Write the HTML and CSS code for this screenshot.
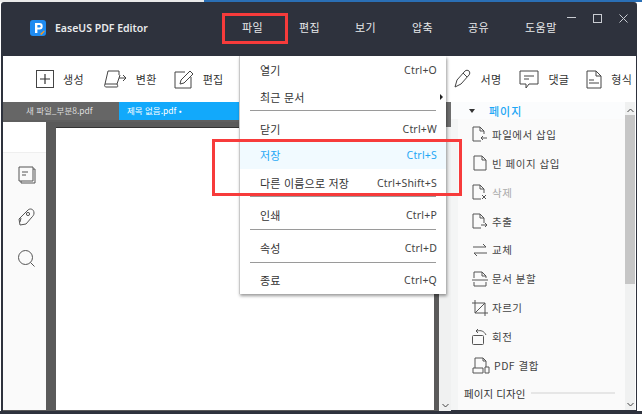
FILE: index.html
```html
<!DOCTYPE html>
<html lang="ko">
<head>
    <meta charset="UTF-8">
    <title>EaseUS PDF Editor</title>
    <link rel="stylesheet" href="styles.css">
</head>
<body>
<div class="app">
    <div class="top-strip"><div class="strip-blue"></div></div>
    <header class="titlebar">
        <div class="brand">
            <svg class="logo" width="16" height="16" viewBox="0 0 16 16">
                <rect width="16" height="16" rx="3" fill="#1f8bf0"/>
                <path d="M5 3h4.500a3 3 0 0 1 0 6.400H7.400V13H5z" fill="#fff"/>
                <path d="M7.400 5v2.400h2a1.200 1.200 0 0 0 0-2.400z" fill="#1f8bf0"/>
                <path d="M10 14l4-3.600.8.8L11.500 15z" fill="#f59a23"/>
            </svg>
            <span class="brand-name">EaseUS PDF Editor</span>
        </div>
        <nav class="menubar">
            <span class="menu-file">파일</span>
            <span class="menu-edit">편집</span>
            <span class="menu-view">보기</span>
            <span class="menu-zip">압축</span>
            <span class="menu-share">공유</span>
            <span class="menu-help">도움말</span>
        </nav>
        <div class="win-controls">
            <svg width="9" height="9" viewBox="0 0 9 9"><path d="M0 3.500h9" stroke="#c9ccd2" fill="none"/></svg>
            <svg width="9" height="9" viewBox="0 0 9 9"><rect x=".5" y=".5" width="8" height="8" stroke="#c9ccd2" fill="none"/></svg>
            <svg width="9" height="9" viewBox="0 0 9 9"><path d="M.5.5l8 8M8.500.5l-8 8" stroke="#c9ccd2" fill="none"/></svg>
        </div>
    </header>
    <div class="workspace">
        <div class="toolbar">
            <div class="tool tool-create">
                <svg width="18" height="18" viewBox="0 0 18 18"><rect x=".5" y=".5" width="17" height="17" fill="none" stroke="#444"/><path d="M9 4v10M4 9h10" stroke="#333" stroke-width="1.200"/></svg>
                <span>생성</span>
            </div>
            <div class="tool tool-convert">
                <svg width="24" height="18" viewBox="0 0 24 18"><path d="M5 1h11v4M5 1L2 14h12l3-9M2 14c-1 2 0 3 1 3h11c1 0 1-1 0-3M16 8h7M20 5l3 3-3 3" fill="none" stroke="#444"/></svg>
                <span>변환</span>
            </div>
            <div class="tool tool-edit">
                <svg width="20" height="20" viewBox="0 0 20 20"><path d="M11 3H1v16h16V8" fill="none" stroke="#444"/><path d="M6 15l1-4 9-9 3 3-9 9z" fill="none" stroke="#444"/></svg>
                <span>편집</span>
            </div>
            <div class="tool tool-sign">
                <svg width="18" height="20" viewBox="0 0 18 20"><path d="M1 18l2-7 8-9c1-1 3-1 4 0s1 3 0 4l-8 9zM9 4l4 4" fill="none" stroke="#444"/></svg>
                <span>서명</span>
            </div>
            <div class="tool tool-comment">
                <svg width="20" height="19" viewBox="0 0 20 19"><path d="M1 1h18v13H10l-3 4v-4H1z" fill="none" stroke="#444"/><path d="M5 6h10M5 9h5" stroke="#444"/></svg>
                <span>댓글</span>
            </div>
            <div class="tool tool-form">
                <svg width="16" height="19" viewBox="0 0 16 19"><path d="M1 1h9l5 5v12H1zM10 1v5h5M3 10h5M3 13h10" fill="none" stroke="#444"/></svg>
                <span>형식</span>
            </div>
        </div>
        <div class="content">
            <div class="doc-area">
                <div class="tabs">
                    <div class="tab">새 파일_부분8.pdf</div>
                    <div class="tab tab-active">제목 없음.pdf •</div>
                </div>
                <div class="doc-body">
                    <aside class="sidebar">
                        <div class="side-top"></div>
                        <div class="side-icons">
                            <svg width="18" height="18" viewBox="0 0 18 18"><path d="M1 1h14v14H1zM15 3h2v14H3v-2M4 6h6M4 9h4" fill="none" stroke="#555"/></svg>
                            <svg width="17" height="18" viewBox="0 0 17 18"><path d="M1 11L10 2c2-2 6-1 6 3 0 2-1 3-2 4l-6 7-6 1zM3 10l-1 4" fill="none" stroke="#555"/><circle cx="10" cy="6" r="1.600" fill="none" stroke="#555"/></svg>
                            <svg width="17" height="17" viewBox="0 0 17 17"><circle cx="7.500" cy="7.500" r="7" fill="none" stroke="#555"/><path d="M12.500 12.500l4 4" stroke="#555"/></svg>
                        </div>
                    </aside>
                    <main class="page-gutter">
                        <div class="page"></div>
                    </main>
                    <div class="doc-scroll">
                        <div class="doc-thumb"></div>
                        <svg class="chev" width="7" height="5" viewBox="0 0 7 5"><path d="M.5 1l3 3 3-3" fill="none" stroke="#444"/></svg>
                    </div>
                </div>
            </div>
            <aside class="panel">
                <div class="panel-head">
                    <span class="caret"></span>
                    <span class="panel-title">페이지</span>
                </div>
                <div class="panel-list">
                    <div class="panel-item">
                        <svg width="16" height="16" viewBox="0 0 16 16"><path d="M1 1h7l4 4v3M8 1v4h4M9 15H1V1M15 12h-6M11 10l-2 2 2 2" fill="none" stroke="#555"/></svg>
                        <span>파일에서 삽입</span>
                    </div>
                    <div class="panel-item">
                        <svg width="16" height="16" viewBox="0 0 16 16"><path d="M2 1h8l4 4v10H2zM10 1v4h4" fill="none" stroke="#555"/></svg>
                        <span>빈 페이지 삽입</span>
                    </div>
                    <div class="panel-item item-off">
                        <svg width="16" height="16" viewBox="0 0 16 16"><path d="M9 15H1V1h7l4 4v4M8 1v4h4M10 11l4 4M14 11l-4 4" fill="none" stroke="#555"/></svg>
                        <span>삭제</span>
                    </div>
                    <div class="panel-item">
                        <svg width="16" height="16" viewBox="0 0 16 16"><path d="M9 15H1V1h7l4 4v5M8 1v4h4M9 12h6M13 10l2 2-2 2" fill="none" stroke="#555"/></svg>
                        <span>추출</span>
                    </div>
                    <div class="panel-item">
                        <svg width="16" height="16" viewBox="0 0 16 16"><path d="M1 5h13M11 2l3 3M15 11H2M5 14l-3-3" fill="none" stroke="#555"/></svg>
                        <span>교체</span>
                    </div>
                    <div class="panel-item">
                        <svg width="16" height="16" viewBox="0 0 16 16"><path d="M2 7V1h8l4 4v2M2 11v4h12v-4M0 9h16M10 1v4h4" fill="none" stroke="#555"/></svg>
                        <span>문서 분할</span>
                    </div>
                    <div class="panel-item">
                        <svg width="16" height="16" viewBox="0 0 16 16"><path d="M3 0v13h13M0 3h13v13M3 13L13 3" fill="none" stroke="#555"/></svg>
                        <span>자르기</span>
                    </div>
                    <div class="panel-item">
                        <svg width="16" height="16" viewBox="0 0 16 16"><rect x=".5" y="6.500" width="11" height="9" rx="1" fill="none" stroke="#555"/><path d="M5 2c4-1 7 0 9 4M6 0L4 2l2 2" fill="none" stroke="#555"/></svg>
                        <span>회전</span>
                    </div>
                    <div class="panel-item item-merge">
                        <svg width="18" height="17" viewBox="0 0 18 17"><path d="M3 11V1h8l3 3v6M11 1v3h3M1 11h10v5H1zM13 10h4v6h-4z" fill="none" stroke="#555"/></svg>
                        <span>PDF 결합</span>
                    </div>
                </div>
                <div class="panel-section">
                    <span>페이지 디자인</span>
                    <i class="section-line"></i>
                </div>
            </aside>
            <div class="panel-scroll">
                <svg width="7" height="5" viewBox="0 0 7 5"><path d="M.5 4l3-3 3 3" fill="none" stroke="#444"/></svg>
                <div class="panel-thumb"></div>
                <svg class="chev" width="7" height="5" viewBox="0 0 7 5"><path d="M.5 1l3 3 3-3" fill="none" stroke="#444"/></svg>
            </div>
        </div>
    </div>
    <div class="bottom-strip"></div>
</div>

<div class="file-menu">
    <div class="menu-row"><span>열기</span><span class="key">Ctrl+O</span></div>
    <div class="menu-row"><span>최근 문서</span><span class="arrow"></span></div>
    <hr class="menu-sep">
    <div class="menu-row row-close"><span>닫기</span><span class="key">Ctrl+W</span></div>
    <div class="menu-row row-hover"><span>저장</span><span class="key">Ctrl+S</span></div>
    <div class="menu-row"><span>다른 이름으로 저장</span><span class="key">Ctrl+Shift+S</span></div>
    <hr class="menu-sep">
    <div class="menu-row row-tall"><span>인쇄</span><span class="key">Ctrl+P</span></div>
    <hr class="menu-sep">
    <div class="menu-row row-tall"><span>속성</span><span class="key">Ctrl+D</span></div>
    <hr class="menu-sep">
    <div class="menu-row row-tall row-last"><span>종료</span><span class="key">Ctrl+Q</span></div>
</div>

<div class="mark mark-file"></div>
<div class="mark mark-save"></div>
</body>
</html>
```

FILE: styles.css
```css
html, body {
    margin: 0;
    padding: 0;
}

body {
    position: relative;
    width: 642px;
    height: 414px;
    overflow: hidden;
    background: #fff;
    font-family: "Noto Sans CJK KR", "Noto Sans", sans-serif;
    font-size: 11px;
    color: #333;
}

.app {
    display: flex;
    flex-direction: column;
    height: 414px;
}

.top-strip {
    height: 2px;
    display: flex;
    justify-content: flex-end;
    background: #e9e9e9;
}

.strip-blue {
    width: 438px;
    background: #2a6fb5;
}

/* title bar */
.titlebar {
    height: 54px;
    margin: 0 5px 0 1px;
    background: #2e323d;
    border-radius: 3px 3px 0 0;
    display: flex;
    color: #e8e9eb;
    position: relative;
}

.brand {
    display: flex;
    align-items: center;
    gap: 9px;
    padding: 0 0 2px 29px;
    width: 190px;
    box-sizing: border-box;
}

.brand-name {
    font-family: "Noto Sans", sans-serif;
    font-weight: 600;
    font-size: 10.5px;
    white-space: nowrap;
}

.menubar {
    display: flex;
    align-items: center;
    padding-bottom: 4px;
    padding-left: 51px;
    font-size: 11px;
    letter-spacing: 0.5px;
}

.menu-file { width: 57px; }
.menu-edit { width: 56px; }
.menu-view { width: 57px; }
.menu-zip { width: 56px; }
.menu-share { width: 57px; }

.win-controls {
    position: absolute;
    top: 12px;
    right: 9px;
    display: flex;
    gap: 17px;
}

/* main frame */
.workspace {
    flex: 1;
    min-height: 0;
    margin: 0 5px 0 1px;
    padding-left: 2px;
    padding-right: 1px;
    background: #2e323d;
    display: flex;
    flex-direction: column;
}

.toolbar {
    height: 46px;
    flex: none;
    background: #fff;
    display: flex;
    align-items: center;
    position: relative;
}

.tool {
    display: flex;
    align-items: center;
    gap: 9px;
    font-size: 11px;
    color: #333;
    letter-spacing: 0.3px;
}

.tool-create { margin-left: 33px; }
.tool-convert { margin-left: 19px; }
.tool-edit { margin-left: 17px; }
.tool-sign { margin-left: 230px; }
.tool-comment { margin-left: 18px; }
.tool-form { margin-left: 17px; }

.content {
    flex: 1;
    min-height: 0;
    display: flex;
}

.doc-area {
    width: 448px;
    flex: none;
    display: flex;
    flex-direction: column;
    background: #5a5a5a;
}

.tabs {
    height: 20px;
    flex: none;
    display: flex;
    background: #5f5f5f;
}

.tab {
    width: 116px;
    height: 18px;
    padding-left: 23px;
    box-sizing: border-box;
    line-height: 17px;
    font-size: 8.5px;
    color: #ddd;
    white-space: nowrap;
    background: #666;
}

.tab-active {
    width: 120px;
    padding-left: 8px;
    background: #12a9fb;
    color: #fff;
}

.doc-body {
    flex: 1;
    min-height: 0;
    display: flex;
}

.sidebar {
    width: 43px;
    flex: none;
    background: #fafafa;
    margin-bottom: 1px;
}

.side-top {
    height: 30px;
    background: #fff;
    border-bottom: 1px solid #efefef;
}

.side-icons {
    display: flex;
    flex-direction: column;
    align-items: center;
    gap: 24px;
    padding: 13px 0 0 4px;
}

.page-gutter {
    flex: 1;
    min-width: 0;
    background: #5a5a5a;
    padding: 5px 5px 1px 10px;
}

.page {
    background: #fff;
    height: 100%;
    box-sizing: border-box;
    border-top: 1px solid #333;
}

.doc-scroll {
    width: 12px;
    flex: none;
    background: #f0f1f1;
    position: relative;
    display: flex;
    flex-direction: column;
    align-items: center;
    justify-content: flex-end;
    padding-bottom: 3px;
    box-sizing: border-box;
}

.doc-thumb {
    position: absolute;
    top: -20px;
    left: 0;
    width: 12px;
    height: 25px;
    background: #6f6f6f;
}

.panel {
    flex: 1;
    min-width: 0;
    background: #fafafa;
    border-left: 7px solid #f4f5f5;
    display: flex;
    flex-direction: column;
    margin-bottom: 1px;
}

.panel-head {
    height: 17px;
    flex: none;
    display: flex;
    align-items: center;
    gap: 14px;
    margin-left: -7px;
    padding-left: 18px;
    background: #fbfcfd;
}

.caret {
    width: 0;
    height: 0;
    border: 3.5px solid transparent;
    border-top: 4px solid #333;
    border-bottom: 0;
}

.panel-title {
    font-size: 11px;
    font-weight: 500;
    color: #1ea7f5;
    letter-spacing: 1px;
}

.panel-list {
    flex: none;
    display: flex;
    flex-direction: column;
    padding: 1px 0 0 14px;
}

.panel-item {
    height: 28.875px;
    display: flex;
    align-items: center;
    gap: 4px;
    font-size: 10.5px;
    color: #444;
    letter-spacing: 0.5px;
}

.item-off { color: #a9a9a9; }
.item-merge { gap: 3px; }
.item-merge span { margin-left: 1px; }

.panel-section {
    height: 27px;
    display: flex;
    align-items: center;
    gap: 5px;
    padding-left: 6px;
    font-size: 10.5px;
    color: #333;
    letter-spacing: 0.1px;
}

.section-line {
    width: 84px;
    height: 2px;
    background: #e6e6e6;
}

.panel-scroll {
    width: 11px;
    flex: none;
    background: #f0f1f1;
    border-right: 1px solid #fff;
    display: flex;
    flex-direction: column;
    align-items: center;
    padding: 6px 0 3px;
    box-sizing: border-box;
    margin-bottom: 1px;
}

.panel-thumb {
    width: 10px;
    height: 169px;
    margin-top: 2px;
    background: #c6c6c6;
}

.chev { margin-top: auto; }

.bottom-strip {
    height: 3px;
    background: #2e323d;
}

/* file dropdown */
.file-menu {
    position: absolute;
    left: 239px;
    top: 56px;
    width: 207px;
    height: 238px;
    box-sizing: border-box;
    background: #fff;
    border-left: 1px solid #c8c8c8;
    box-shadow: 1px 2px 3px rgba(0, 0, 0, 0.4);
    font-size: 11px;
    color: #333;
}

.menu-row {
    height: 27px;
    display: flex;
    align-items: center;
    justify-content: space-between;
    padding: 0 9px 0 20px;
    letter-spacing: 0.2px;
    box-sizing: border-box;
}

.row-close {
    height: 30px;
    padding-top: 6px;
}

.row-tall {
    height: 32px;
    padding-top: 4px;
}

.row-last { padding-top: 2px; }

.row-hover {
    height: 28px;
    background: #f1faff;
    color: #1ea7f5;
}

.row-hover .key { color: #1ea7f5; }

.key {
    font-family: "Noto Sans", sans-serif;
    font-size: 10.5px;
    color: #444;
}

.arrow {
    width: 0;
    height: 0;
    margin-right: -6px;
    border: 3px solid transparent;
    border-left: 3px solid #222;
    border-right: 0;
}

.menu-sep {
    height: 1px;
    margin: 0 10px;
    border: 0;
    background: #9a9a9a;
}

/* red annotations */
.mark {
    position: absolute;
    box-sizing: border-box;
    border: 3px solid #f73b3b;
}

.mark-file {
    left: 222px;
    top: 13px;
    width: 66px;
    height: 31px;
}

.mark-save {
    left: 212px;
    top: 139px;
    width: 250px;
    height: 57px;
}
```
